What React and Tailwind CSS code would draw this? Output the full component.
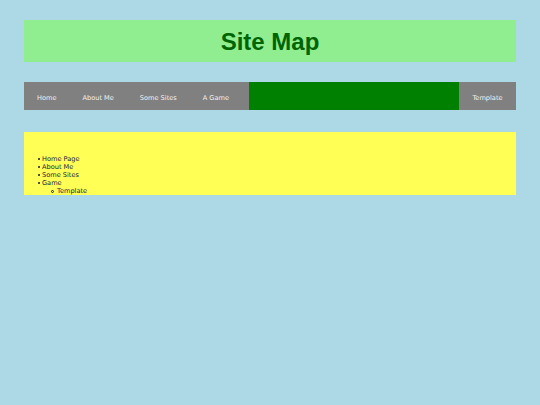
export default function App() {
  const navFont = { fontFamily: '"DejaVu Sans", Verdana, sans-serif' };
  const Item = ({ children }) => (
    <li className="flex h-[8px] items-center gap-[2px]">
      <span className="h-[2px] w-[2px] rounded-full bg-[#1a1a40]"></span>
      <span>{children}</span>
    </li>
  );
  return (
    <div className="min-h-[405px] w-[540px] bg-[#add8e6] pt-5">
      <div className="mx-6 flex h-[42px] items-center justify-center bg-[#90ee90] pt-[1px]">
        <h1 className="text-[24px] font-bold leading-none text-[#006400]" style={{ fontFamily: '"Liberation Sans", Arial, sans-serif' }}>
          Site Map
        </h1>
      </div>
      <nav className="mx-6 mt-5 flex h-[28px] bg-[#808080] text-[6.6px] text-[#f2f2f2]" style={navFont}>
        <div className="flex items-center px-[13px] pt-[5px]">Home</div>
        <div className="flex items-center px-[13px] pt-[5px]">About Me</div>
        <div className="flex items-center px-[13px] pt-[5px]">Some Sites</div>
        <div className="flex items-center pl-[13px] pr-[20px] pt-[5px]">A Game</div>
        <div className="flex-1 bg-[#008000]"></div>
        <div className="flex w-[57px] items-center justify-center pt-[5px]">Template</div>
      </nav>
      <div className="mx-6 mt-[22px] h-[63px] bg-[#ffff55] pt-[23px] text-[6.6px] leading-[8px] text-[#1a1a40]" style={navFont}>
        <ul className="pl-[14px]">
          <Item>Home Page</Item>
          <Item>About Me</Item>
          <Item>Some Sites</Item>
          <Item>Game</Item>
          <li className="flex h-[8px] items-center gap-[3px] pl-[13px]">
            <span className="h-[3px] w-[3px] rounded-full border-[0.8px] border-[#1a1a40]"></span>
            <span>Template</span>
          </li>
        </ul>
      </div>
    </div>
  );
}
